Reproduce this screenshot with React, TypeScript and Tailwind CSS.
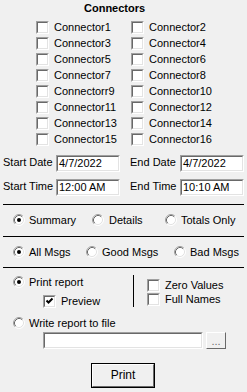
import React from "react";

function Check({ checked }: { checked?: boolean }) {
  return (
    <span className="block w-[13px] h-[13px] shrink-0 border border-t-[#a0a0a0] border-l-[#a0a0a0] border-b-white border-r-white">
      <span className="block w-full h-full border border-t-[#696969] border-l-[#696969] border-b-[#e3e3e3] border-r-[#e3e3e3] bg-white">
        {checked && (
          <svg width="9" height="9" viewBox="0 0 9 9" className="block">
            <path d="M1.5 3.5 L3.5 5.5 L7.5 1.5" fill="none" stroke="#000" strokeWidth="2" />
          </svg>
        )}
      </span>
    </span>
  );
}

function Radio({ checked }: { checked?: boolean }) {
  return (
    <svg width="12" height="12" viewBox="0 0 12 12" className="block shrink-0">
      <circle cx="6" cy="6" r="5" fill="#fff" />
      <path d="M2.11 9.89 A5.5 5.5 0 0 1 9.89 2.11" fill="none" stroke="#a0a0a0" />
      <path d="M9.89 2.11 A5.5 5.5 0 0 1 2.11 9.89" fill="none" stroke="#fff" />
      <path d="M2.82 9.18 A4.5 4.5 0 0 1 9.18 2.82" fill="none" stroke="#696969" />
      <path d="M9.18 2.82 A4.5 4.5 0 0 1 2.82 9.18" fill="none" stroke="#e3e3e3" />
      {checked && <circle cx="6" cy="6" r="2" fill="#000" />}
    </svg>
  );
}

function TextBox({ value, className }: { value?: string; className: string }) {
  return (
    <div className={`border border-t-[#a0a0a0] border-l-[#a0a0a0] border-b-white border-r-white ${className}`}>
      <div className="h-full border border-t-[#696969] border-l-[#696969] border-b-[#e3e3e3] border-r-[#e3e3e3] bg-white pl-[1px] leading-[13px]">
        {value}
      </div>
    </div>
  );
}

function Sep() {
  return <div className="mx-[3px] h-px bg-black" />;
}

const connectors = Array.from({ length: 16 }, (_, i) =>
  i === 8 ? "Connectorr9" : `Connector${i + 1}`
);

export default function App() {
  return (
    <div className="w-[247px] h-[392px] bg-[#f0f0f0] text-black text-[11px] leading-[13px] font-['Liberation_Sans',Arial,sans-serif] overflow-hidden">
      <div className="h-[21px] pt-[2px] pl-[84px] font-bold">Connectors</div>

      <div className="grid grid-cols-[95px_1fr] gap-y-[3px] pl-[36px]">
        {connectors.map((c) => (
          <div key={c} className="flex items-center h-[13px] gap-[5px]">
            <Check />
            <span>{c}</span>
          </div>
        ))}
      </div>

      <div className="flex items-center px-[3px] mt-[9px]">
        <span className="w-[53px] -mt-[2px]">Start Date</span>
        <TextBox value="4/7/2022" className="w-[64px] h-[17px]" />
        <span className="w-[50px] ml-[10px] -mt-[2px]">End Date</span>
        <TextBox value="4/7/2022" className="w-[64px] h-[17px]" />
      </div>
      <div className="flex items-center px-[3px] mt-[7px]">
        <span className="w-[53px] -mt-[2px]">Start Time</span>
        <TextBox value="12:00 AM" className="w-[64px] h-[17px]" />
        <span className="w-[50px] ml-[10px] -mt-[2px]">End Time</span>
        <TextBox value="10:10 AM" className="w-[64px] h-[17px]" />
      </div>

      <div className="mt-[8px]">
        <Sep />
      </div>

      <div className="flex items-center h-[12px] pl-[13px] mt-[9px]">
        <div className="flex items-center gap-[4px] w-[79px]">
          <Radio checked />
          <span>Summary</span>
        </div>
        <div className="flex items-center gap-[5px] w-[73px]">
          <Radio />
          <span>Details</span>
        </div>
        <div className="flex items-center gap-[4px]">
          <Radio />
          <span>Totals Only</span>
        </div>
      </div>

      <div className="mt-[10px]">
        <Sep />
      </div>

      <div className="flex items-center h-[12px] pl-[13px] mt-[9px]">
        <div className="flex items-center gap-[4px] w-[73px]">
          <Radio checked />
          <span>All Msgs</span>
        </div>
        <div className="flex items-center gap-[4px] w-[88px]">
          <Radio />
          <span>Good Msgs</span>
        </div>
        <div className="flex items-center gap-[4px]">
          <Radio />
          <span>Bad Msgs</span>
        </div>
      </div>

      <div className="mt-[9px]">
        <Sep />
      </div>

      <div className="flex pl-[13px]">
        <div className="w-[120px] flex flex-col">
          <div className="flex items-center h-[12px] gap-[4px] mt-[8px]">
            <Radio checked />
            <span>Print report</span>
          </div>
          <div className="flex items-center h-[13px] gap-[5px] mt-[7px] pl-[30px]">
            <Check checked />
            <span>Preview</span>
          </div>
        </div>
        <div className="w-px h-[32px] bg-black mt-[7px]" />
        <div className="flex flex-col gap-[1px] pl-[13px] mt-[11px]">
          <div className="flex items-center h-[13px] gap-[5px]">
            <Check />
            <span>Zero Values</span>
          </div>
          <div className="flex items-center h-[13px] gap-[5px]">
            <Check />
            <span>Full Names</span>
          </div>
        </div>
      </div>

      <div className="flex items-center h-[12px] gap-[4px] pl-[13px] mt-[9px]">
        <Radio />
        <span>Write report to file</span>
      </div>

      <div className="flex items-center gap-[3px] pl-[43px] mt-[3px]">
        <TextBox className="w-[160px] h-[17px]" />
        <div className="w-[20px] h-[17px] border border-t-white border-l-white border-b-[#696969] border-r-[#696969] bg-[#f0f0f0] flex items-end justify-center text-[#6d6d6d] leading-[10px] pb-[2px]">
          ...
        </div>
      </div>

      <div className="pl-[91px] mt-[14px]">
        <div className="w-[64px] h-[25px] border border-black">
          <div className="h-full border border-t-white border-l-white border-b-[#696969] border-r-[#696969] bg-[#f0f0f0] flex items-center justify-center text-[12px]">
            Print
          </div>
        </div>
      </div>
    </div>
  );
}
